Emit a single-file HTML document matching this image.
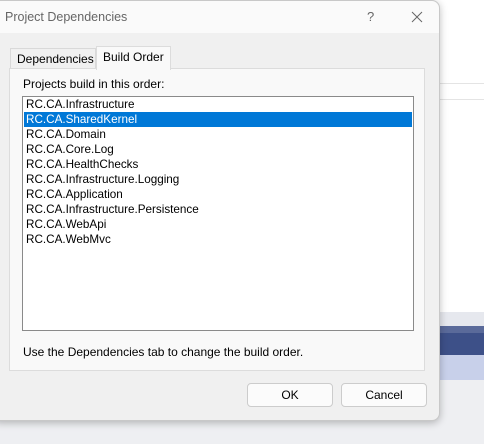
<!DOCTYPE html>
<html><head><style>
body{margin:0;width:484px;height:444px;background:#fff;position:relative;overflow:hidden;font-family:"Liberation Sans",sans-serif;font-size:12px;color:#000}
.a{position:absolute}
</style></head><body>
<div class="a" style="left:0;top:312px;width:484px;height:132px;background:#eeeff2"></div>
<div class="a" style="left:440px;top:83px;width:44px;height:1px;background:#e4e4e4"></div>
<div class="a" style="left:440px;top:99px;width:44px;height:1px;background:#e4e4e4"></div>
<div class="a" style="left:440px;top:312px;width:44px;height:14px;background:#e6e8ee"></div>
<div class="a" style="left:440px;top:326px;width:44px;height:7px;background:#5a6a9a"></div>
<div class="a" style="left:440px;top:333px;width:44px;height:22px;background:#3d5088"></div>
<div class="a" style="left:440px;top:355px;width:44px;height:25px;background:#c8d0ea"></div>
<div class="a" style="left:-8px;top:0;width:448px;height:421px;background:#f0f0f0;border-radius:8px;box-shadow:0 2px 8px rgba(0,0,0,.25);border:1px solid #c8c8c8;box-sizing:border-box"></div>
<div class="a" style="left:0;top:1px;width:439px;height:32px;background:#fafafa;border-top-right-radius:8px"></div>
<div class="a" style="left:5px;top:10px;color:#666;font-size:12.5px">Project Dependencies</div>
<div class="a" style="left:367px;top:9px;color:#666;font-size:13px">?</div>
<svg class="a" style="left:411px;top:11px" width="12" height="12"><path d="M1 1L11 11M11 1L1 11" stroke="#666" stroke-width="1"/></svg>
<div class="a" style="left:10px;top:48px;width:86px;height:20px;background:#f0f0f0;border:1px solid #d9d9d9;border-bottom:none;box-sizing:border-box"></div>
<div class="a" style="left:17px;top:52px">Dependencies</div>
<div class="a" style="left:9px;top:68px;width:416px;height:303px;background:#f9f9f9;border:1px solid #dcdcdc;box-sizing:border-box"></div>
<div class="a" style="left:96px;top:46px;width:75px;height:24px;background:#f9f9f9;border:1px solid #dcdcdc;border-bottom:none;box-sizing:border-box"></div>
<div class="a" style="left:103px;top:50px">Build Order</div>
<div class="a" style="left:23px;top:77px">Projects build in this order:</div>
<div class="a" style="left:22px;top:96px;width:392px;height:235px;background:#fff;border:1px solid #8a8a8a;box-sizing:border-box"></div>
<div class="a" style="left:24px;top:112px;width:388px;height:15px;background:#0078d7"></div>
<div class="a" style="left:26px;top:97px;line-height:15px;font-size:11.7px">
<div>RC.CA.Infrastructure</div><div style="color:#fff">RC.CA.SharedKernel</div><div>RC.CA.Domain</div><div>RC.CA.Core.Log</div><div>RC.CA.HealthChecks</div><div>RC.CA.Infrastructure.Logging</div><div>RC.CA.Application</div><div>RC.CA.Infrastructure.Persistence</div><div>RC.CA.WebApi</div><div>RC.CA.WebMvc</div></div>
<div class="a" style="left:23px;top:345px">Use the Dependencies tab to change the build order.</div>
<div class="a" style="left:247px;top:383px;width:86px;height:24px;background:#fbfbfb;border:1px solid #ccc;border-radius:4px;box-sizing:border-box;text-align:center;line-height:22px">OK</div>
<div class="a" style="left:341px;top:383px;width:86px;height:24px;background:#fbfbfb;border:1px solid #ccc;border-radius:4px;box-sizing:border-box;text-align:center;line-height:22px">Cancel</div>
</body></html>
